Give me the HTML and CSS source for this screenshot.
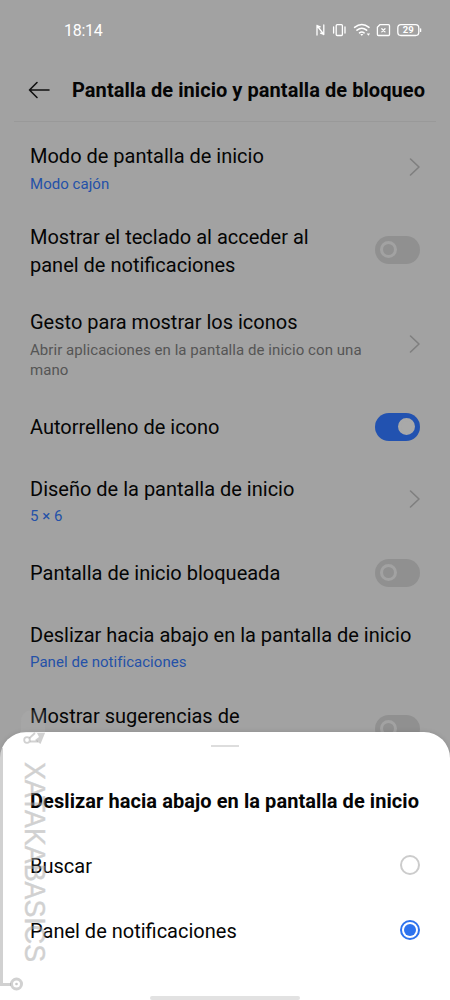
FILE: index.html
```html
<!DOCTYPE html>
<html lang="es">
<head>
<meta charset="utf-8">
<title>Pantalla de inicio y pantalla de bloqueo</title>
<link rel="stylesheet" href="styles.css">
</head>
<body>
<main class="phone">
  <header class="status">
    <span class="clock">18:14</span>
    <svg class="status-icons" width="108" height="20" viewBox="314 20 108 20">
      <g fill="none" stroke="#fff" stroke-width="1.3" stroke-linecap="round" stroke-linejoin="round">
        <path d="M317 35V25.5L323.8 34.5V25M317 25.5L320.2 26.8M323.8 34.5L320.6 33.2" stroke-width="1.3"/>
        <rect x="336.2" y="24.7" width="6.2" height="10.8" rx="1"/>
        <path d="M333.6 27v6M345 27v6"/>
        <path d="M354.6 27.3Q361.8 21.8 369 27.3M357 30.2Q361.8 26.4 366.6 30.2M359.5 32.8Q361.8 31.2 364.1 32.8" stroke-width="1.6"/>
        <path d="M379.8 24.7H388.5Q389.5 24.7 389.5 25.7V34.5Q389.5 35.5 388.5 35.5H378.4Q377.4 35.5 377.4 34.5V27.2Z"/>
        <path d="M381.8 28.7l3.2 3.2M385 28.7l-3.2 3.2"/>
        <rect x="397.8" y="24.7" width="21" height="10.8" rx="3.2"/>
        <path d="M420.6 28.8v2.6"/>
      </g>
      <path d="M360.3 34h3l-1.5 2ZM366.7 33.5h3.4l-1.7 2.2Z" fill="#fff"/>
      <text class="battery" x="408.3" y="33.4" text-anchor="middle">29</text>
    </svg>
  </header>
  <div class="topbar">
    <svg class="back" width="22" height="18" viewBox="0 0 22 18"><path d="M21 9H1.5M9 1.5L1.5 9L9 16.5"/></svg>
    <h1>Pantalla de inicio y pantalla de bloqueo</h1>
  </div>
  <section class="list">
    <div class="row row-first"><div class="copy"><p class="title">Modo de pantalla de inicio</p><p class="value">Modo cajón</p></div><svg class="chevron" width="12" height="20" viewBox="0 0 12 20"><path d="M1.5 2L10 10L1.5 18"/></svg></div>
    <div class="row row-tall row-wrap"><div class="copy"><p class="title">Mostrar el teclado al acceder al<br>panel de notificaciones</p></div><span class="switch"></span></div>
    <div class="row row-note"><div class="copy"><p class="title">Gesto para mostrar los iconos</p><p class="note">Abrir aplicaciones en la pantalla de inicio con una<br>mano</p></div><svg class="chevron" width="12" height="20" viewBox="0 0 12 20"><path d="M1.5 2L10 10L1.5 18"/></svg></div>
    <div class="row"><div class="copy"><p class="title">Autorrelleno de icono</p></div><span class="switch on"></span></div>
    <div class="row row-tall"><div class="copy"><p class="title">Diseño de la pantalla de inicio</p><p class="value">5 × 6</p></div><svg class="chevron" width="12" height="20" viewBox="0 0 12 20"><path d="M1.5 2L10 10L1.5 18"/></svg></div>
    <div class="row"><div class="copy"><p class="title">Pantalla de inicio bloqueada</p></div><span class="switch"></span></div>
    <div class="row row-tall"><div class="copy"><p class="title">Deslizar hacia abajo en la pantalla de inicio</p><p class="value">Panel de notificaciones</p></div></div>
    <div class="row row-tall row-last"><div class="copy"><p class="title">Mostrar sugerencias de<br>aplicaciones</p></div><span class="switch"></span></div>
  </section>
  <section class="sheet">
    <div class="grip"></div>
    <h2>Deslizar hacia abajo en la pantalla de inicio</h2>
    <div class="option"><span>Buscar</span><i class="radio"></i></div>
    <div class="option"><span>Panel de notificaciones</span><i class="radio checked"></i></div>
    <div class="home"></div>
  </section>
  <svg class="brand" width="60" height="300" viewBox="0 700 60 300">
    <path d="M21 733V722Q21 710 34 710H45V733Z" fill="#bbb" opacity=".2"/>
    <g fill="none" stroke="#a4a4a4" stroke-opacity=".5">
      <path d="M1.5 748V984.5H11" stroke-width="3"/>
      <circle cx="16.5" cy="984" r="5" stroke-width="3"/>
      <circle cx="27" cy="740" r="2.8" stroke-width="1.8"/>
      <path d="M29.5 738L35 733M30 741.5H38" stroke-width="1.8"/>
    </g>
    <circle cx="16.5" cy="984" r="1.3" fill="#a4a4a4" fill-opacity=".6"/>
    <path d="M37 733H45L40.5 744L35 740L39 737Z" fill="#a4a4a4" fill-opacity=".5"/>
    <text class="brand-text" transform="translate(24.5 762) rotate(90)" textLength="200" lengthAdjust="spacingAndGlyphs">XATAKABASICS</text>
  </svg>
</main>
</body>
</html>
```
FILE: styles.css
```css
*, *::before { box-sizing: border-box; }
body, h1, h2, p { margin: 0; }
body { background: #a2a2a2; font-family: Roboto, sans-serif; color: #050505; }
.phone { position: relative; width: 450px; height: 1000px; overflow: hidden; background: #a2a2a2; }
.status { display: flex; justify-content: space-between; align-items: center; height: 60px; padding: 0 28px 0 64px; color: #fff; }
.clock { font-size: 16px; letter-spacing: -.3px; }
.battery { fill: #fff; font-size: 9.5px; font-weight: 700; letter-spacing: .2px; }
.topbar { display: flex; align-items: center; gap: 22px; height: 62px; margin: 0 14px; padding: 0 0 2px 14px; border-bottom: 1px solid #999; }
.back { flex: none; fill: none; stroke: #111; stroke-width: 1.6; stroke-linecap: round; stroke-linejoin: round; }
h1 { font-size: 20px; font-weight: 700; line-height: 28px; letter-spacing: .06px; white-space: nowrap; }
.list { padding-top: 5px; }
.row { display: flex; justify-content: space-between; align-items: center; height: 62px; padding: 0 30px; }
.row-first { height: 82px; }
.row-tall { height: 84px; }
.row-note { height: 103px; }
.copy { padding-top: 2px; }
.row-first .copy { padding-top: 1px; }
.row-first .value { padding-top: 4px; }
.row-wrap .copy { padding: 0 0 1px; }
.row-wrap .title { line-height: 28px; }
.row-note .copy, .row-last .copy { padding-top: 0; }
.title { font-size: 20px; line-height: 27.5px; white-space: nowrap; }
.value, .note { font-size: 15px; line-height: 20px; white-space: nowrap; }
.value { padding-top: 3px; color: #2451a8; letter-spacing: .04px; }
.note { padding-top: 4px; color: #555; letter-spacing: .06px; }
.chevron { flex: none; margin: -2px -1px 0 0; fill: none; stroke: #7f7f7f; stroke-width: 1.6; stroke-linecap: round; stroke-linejoin: round; }
.switch { display: flex; align-items: center; flex: none; width: 45px; height: 28px; margin-top: -1px; padding: 0 5px; border-radius: 14px; background: #909090; }
.switch::before { content: ""; width: 17px; height: 17px; border: 3px solid #a2a2a2; border-radius: 50%; }
.row-wrap .switch, .row-last .switch { margin-top: -3px; }
.switch.on { justify-content: flex-end; background: #2252b0; }
.switch.on::before { background: #a9a9a9; border-color: #a9a9a9; }
.sheet { position: absolute; left: 0; right: 0; bottom: 0; display: flex; flex-direction: column; height: 268px; padding: 13px 30px 0; border-radius: 26px 26px 0 0; background: #fff; box-shadow: 0 0 5px rgba(0,0,0,.12); }
.grip { flex: none; align-self: center; width: 28px; height: 2px; background: #ddd; }
h2 { margin-top: 40px; font-size: 20px; font-weight: 700; line-height: 28px; letter-spacing: .07px; white-space: nowrap; }
.option { display: flex; align-items: center; justify-content: space-between; height: 65px; font-size: 20px; line-height: 28px; }
.option span { padding-top: 2px; }
h2 + .option { margin-top: 17px; }
.radio { width: 20px; height: 20px; border: 2px solid #ccc; border-radius: 50%; }
.radio.checked { display: grid; place-items: center; border-color: #2e73ee; }
.radio.checked::before { content: ""; width: 12px; height: 12px; border-radius: 50%; background: #2e73ee; }
.home { flex: none; align-self: center; width: 150px; height: 4px; margin-top: auto; border-radius: 2px; background: #e2e2e2; }
.brand { position: absolute; left: 0; bottom: 0; }
.brand-text { fill: #a4a4a4; stroke: #a4a4a4; stroke-width: .4px; opacity: .5; font-family: "Liberation Sans", sans-serif; font-size: 29px; }
```
